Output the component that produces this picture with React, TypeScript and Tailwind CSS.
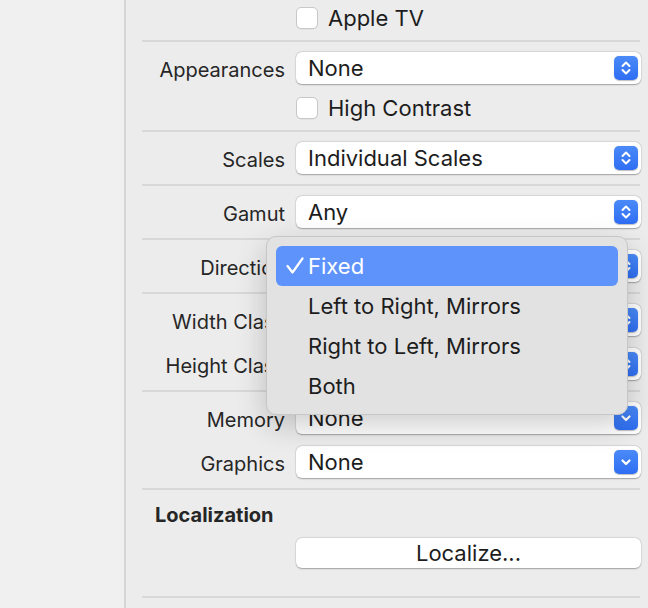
import React from 'react';

const font = "font-['Inter','Liberation_Sans',sans-serif]";

const Stepper = () => (
    <div className="w-[24px] h-[24px] rounded-[5px] bg-gradient-to-b from-[#4a8af8] to-[#2f6ef3] shadow-[0_0.5px_1px_rgba(0,0,0,0.25)] flex items-center justify-center">
        <svg width="24" height="24" viewBox="0 0 24 24" fill="none" stroke="white" strokeWidth="2" strokeLinecap="round" strokeLinejoin="round">
            <path d="M8.5 10 L12 6.5 L15.5 10" />
            <path d="M8.5 14 L12 17.5 L15.5 14" />
        </svg>
    </div>
);

const PullDown = () => (
    <div className="w-[24px] h-[24px] rounded-[5px] bg-gradient-to-b from-[#4a8af8] to-[#2f6ef3] shadow-[0_0.5px_1px_rgba(0,0,0,0.25)] flex items-center justify-center">
        <svg width="24" height="24" viewBox="0 0 24 24" fill="none" stroke="white" strokeWidth="2.2" strokeLinecap="round" strokeLinejoin="round">
            <path d="M8.5 10.5 L12 14 L15.5 10.5" />
        </svg>
    </div>
);

const Popup = ({ value, pulldown }: { value: string; pulldown?: boolean }) => (
    <div className="h-[32px] bg-white rounded-[6px] shadow-[0_0.5px_1.5px_rgba(0,0,0,0.3),0_0_0_0.5px_rgba(0,0,0,0.06)] flex items-center pl-[12px] pr-[3px]">
        <span className="flex-1 text-[22px] leading-none text-[#1d1d1d]">{value}</span>
        {pulldown ? <PullDown /> : <Stepper />}
    </div>
);

const Checkbox = ({ label }: { label: string }) => (
    <div className="h-[24px] flex items-center gap-[10px]">
        <div className="w-[22px] h-[22px] bg-white rounded-[5px] border border-[#c8c8c8] shadow-[0_0.5px_0.5px_rgba(0,0,0,0.08)]" />
        <span className="text-[22px] leading-none text-[#1d1d1d]">{label}</span>
    </div>
);

const Row = ({ label, children }: { label?: string; children: React.ReactNode }) => (
    <div className="grid grid-cols-[143px_1fr] gap-x-[11px] items-center pr-[7px]">
        <span className="text-right text-[20px] leading-none pt-[3px] text-[#262626] whitespace-nowrap">{label ?? ''}</span>
        <div className="relative">{children}</div>
    </div>
);

const Sep = () => <div className="h-[2px] bg-[#d8d8d8] mr-[8px]" />;

const CheckMark = () => (
    <svg width="18" height="18" viewBox="0 0 18 18" fill="none" stroke="white" strokeWidth="2.2" strokeLinecap="round" strokeLinejoin="round">
        <path d="M1.5 9 L6.5 15.5 L16.5 1.5" />
    </svg>
);

const DirectionMenu = () => {
    const items = ['Fixed', 'Left to Right, Mirrors', 'Right to Left, Mirrors', 'Both'];
    return (
        <div className="absolute left-[-30px] top-[-14px] z-10 w-[362px] rounded-[10px] bg-[#e2e2e2] border border-[#c6c6c6] shadow-[0_10px_30px_rgba(0,0,0,0.2)] p-[9px] pb-[8px]">
            {items.map((item, i) => (
                <div key={item} className={`h-[40px] rounded-[6px] flex items-center text-[22px] leading-none ${i === 0 ? 'bg-[#5e93fb] text-white' : 'text-[#1d1d1d]'}`}>
                    <span className="w-[32px] flex justify-end pr-[4px]">{i === 0 && <CheckMark />}</span>
                    <span>{item}</span>
                </div>
            ))}
        </div>
    );
};

export default function App() {
    return (
        <div className={`flex h-[608px] w-[648px] overflow-hidden bg-[#ececec] ${font}`}>
            <div className="w-[124px] shrink-0 bg-[#f0f0f0] border-r-2 border-[#d6d6d6] box-content" />
            <div className="flex-1 pl-[16px] flex flex-col">
                <div className="pt-[6px] pb-[10px]">
                    <Row><Checkbox label="Apple TV" /></Row>
                </div>
                <Sep />
                <div className="py-[10px] flex flex-col gap-[12px]">
                    <Row label="Appearances"><Popup value="None" /></Row>
                    <Row><Checkbox label="High Contrast" /></Row>
                </div>
                <Sep />
                <div className="py-[10px]">
                    <Row label="Scales"><Popup value="Individual Scales" /></Row>
                </div>
                <Sep />
                <div className="py-[10px]">
                    <Row label="Gamut"><Popup value="Any" /></Row>
                </div>
                <Sep />
                <div className="py-[10px] relative z-10">
                    <Row label="Direction">
                        <Popup value="Fixed" />
                        <DirectionMenu />
                    </Row>
                </div>
                <Sep />
                <div className="py-[10px] flex flex-col gap-[12px]">
                    <Row label="Width Class"><Popup value="Any" /></Row>
                    <Row label="Height Class"><Popup value="Any" /></Row>
                </div>
                <Sep />
                <div className="py-[10px] flex flex-col gap-[12px]">
                    <Row label="Memory"><Popup value="None" pulldown /></Row>
                    <Row label="Graphics"><Popup value="None" pulldown /></Row>
                </div>
                <Sep />
                <div className="pt-[13px] pb-[28px] flex flex-col gap-[11px]">
                    <div className="h-[24px] flex items-center pl-[13px] text-[20px] font-bold text-[#262626]">Localization</div>
                    <Row>
                        <div className="h-[30px] bg-white rounded-[6px] shadow-[0_0.5px_1.5px_rgba(0,0,0,0.3),0_0_0_0.5px_rgba(0,0,0,0.06)] flex items-center justify-center text-[22px] leading-none text-[#1d1d1d]">
                            Localize...
                        </div>
                    </Row>
                </div>
                <Sep />
            </div>
        </div>
    );
}
